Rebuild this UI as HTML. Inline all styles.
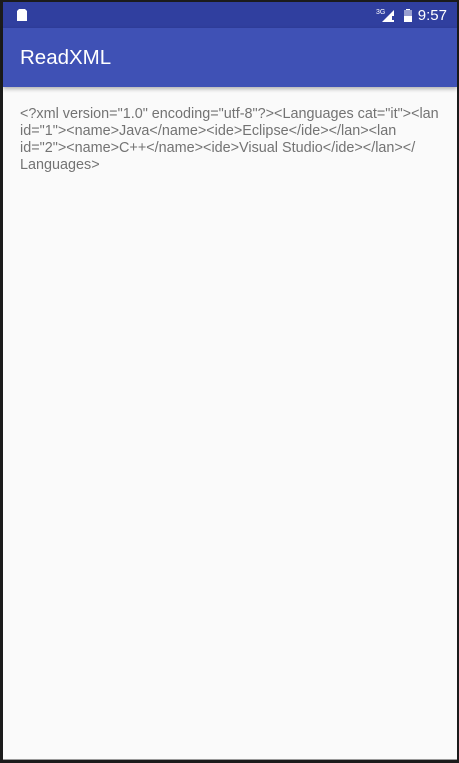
<!DOCTYPE html>
<html><head><meta charset="utf-8"><style>
html,body{margin:0;padding:0;width:459px;height:763px;background:#1b1b1b;overflow:hidden}
.screen{position:absolute;left:3px;top:2px;width:454px;height:757px;background:#fafafa;border-bottom:1px solid #9a9a9a}
.status{position:absolute;left:0;top:0;width:454px;height:26px;background:#303f9f}
.bar{position:absolute;left:0;top:26px;width:454px;height:59px;background:#3f51b5;box-shadow:0 2px 4px rgba(0,0,0,.3)}
.title{position:absolute;left:17px;top:18px;color:#fff;font:20.5px "Liberation Sans",sans-serif}
.time{position:absolute;right:10px;top:5px;color:#fff;font:15px "Liberation Sans",sans-serif}
.txt{position:absolute;left:17px;top:104px;width:430px;color:#737373;font:14.4px/17px "Liberation Sans",sans-serif;white-space:nowrap}
</style></head><body>
<div class="screen">
<div class="status">
<svg width="454" height="26" style="position:absolute;left:0;top:0">
<path d="M16 7h6l2 2v10h-10v-10z" fill="#fff"/>
<text x="373" y="12" font-size="7" fill="#fff" font-family="Liberation Sans">3G</text>
<path d="M391 8v12h-12z" fill="#fff"/>
<rect x="389" y="14" width="2" height="4" fill="#303f9f"/>
<rect x="401" y="8" width="8" height="12" fill="#fff" opacity=".5"/>
<rect x="403" y="7" width="4" height="1" fill="#fff"/>
<path d="M401 14h8v6h-8z" fill="#fff"/>
</svg>
<div class="time">9:57</div>
</div>
<div class="bar"><div class="title">ReadXML</div></div>
<div class="txt">&lt;?xml version="1.0" encoding="utf-8"?&gt;&lt;Languages cat="it"&gt;&lt;lan<br>id="1"&gt;&lt;name&gt;Java&lt;/name&gt;&lt;ide&gt;Eclipse&lt;/ide&gt;&lt;/lan&gt;&lt;lan<br>id="2"&gt;&lt;name&gt;C++&lt;/name&gt;&lt;ide&gt;Visual Studio&lt;/ide&gt;&lt;/lan&gt;&lt;/<br>Languages&gt;</div>
</div>
</body></html>
